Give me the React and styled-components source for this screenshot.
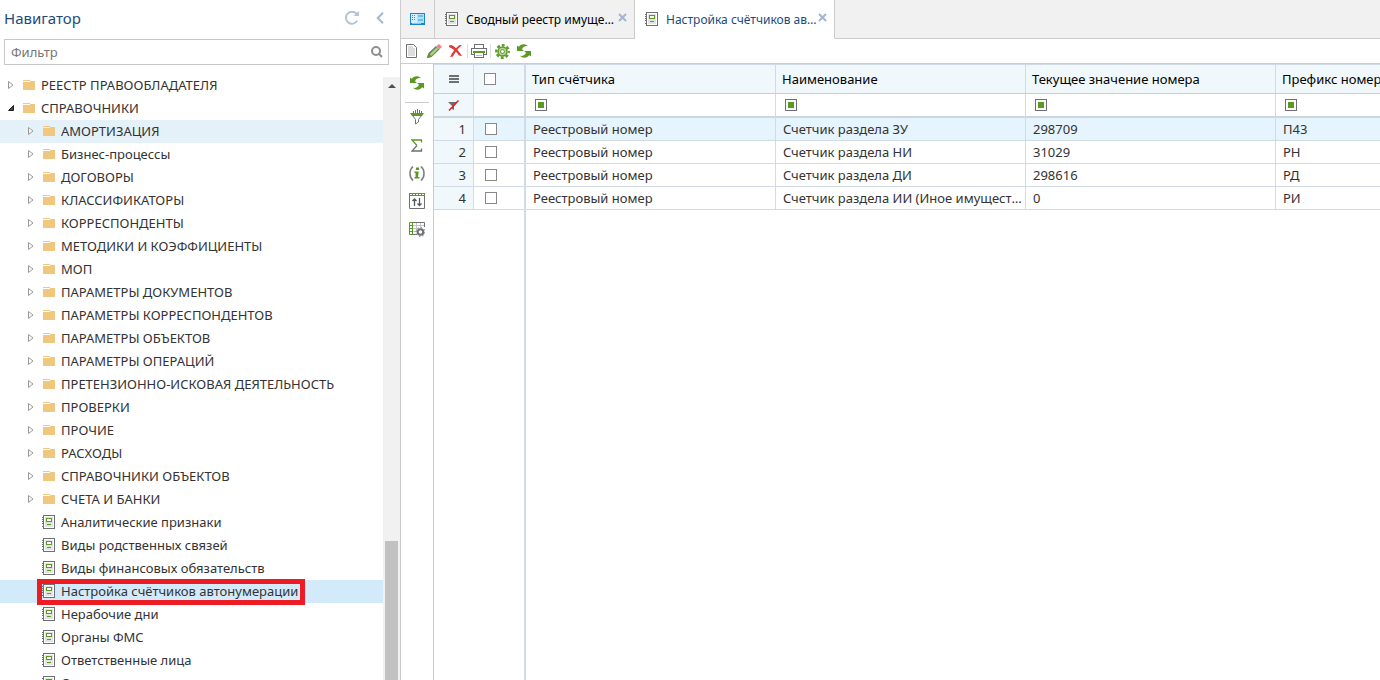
import React from 'react';
import styled, { createGlobalStyle } from 'styled-components';

const GlobalStyle = createGlobalStyle`
    *{ box-sizing:border-box; }
    html, body, #root{ height:100%; }
    body{
        margin:0;
        overflow:hidden;
        background:#fff;
        color:#222;
        font-family:"Noto Sans", "Open Sans", sans-serif;
        font-size:13px;
    }
    button, input{ font:inherit; }
    ul{ list-style:none; margin:0; padding:0; }
`

/* icons */

const FolderIcon = () => (
    <svg width="12" height="10" viewBox="0 0 12 10" shapeRendering="crispEdges">
        <path d="M0 0h7v1H0zM7 1h5v1H7zM0 2h12v8H0z" fill="#efc77f" />
    </svg>
);

const BookIcon = () => (
    <svg width="14" height="14" viewBox="0 0 14 14" shapeRendering="crispEdges">
        <path d="M1 0h12v14H1z" fill="#6e7173" />
        <path d="M2 1h10v12H2z" fill="#fff" />
        <path d="M3 2h8v10H3z" fill="#e3e3e3" />
        <path d="M0 2h1v1H0zM0 4h1v1H0zM0 6h1v1H0zM0 8h1v1H0zM0 11h1v1H0z" fill="#6e7173" />
        <path d="M4 3h6v4H4z" fill="#5a9a22" />
        <path d="M5 4h4v2H5z" fill="#fff" />
        <path d="M5 9h4v1H5z" fill="#5a9a22" />
    </svg>
);

const ClosedArrow = () => (
    <svg width="6" height="8" viewBox="0 0 6 8">
        <path d="M.5.500v7L5 4z" fill="#fff" stroke="#999" />
    </svg>
);

const OpenArrow = () => (
    <svg width="6" height="6" viewBox="0 0 6 6">
        <path d="M5.500.500v5H.500z" fill="#444" stroke="#222" />
    </svg>
);

const RefreshIcon = () => (
    <svg width="14" height="14" viewBox="0 0 14 14" fill="none">
        <path d="M12.200 9.600A6 6 0 1 1 11.600 3" stroke="#b3c4d9" strokeWidth="2" />
        <path d="M8.500 5H14V0z" fill="#b3c4d9" />
    </svg>
);

const CollapseIcon = () => (
    <svg width="8" height="12" viewBox="0 0 8 12" fill="none">
        <path d="M7 .800L1.800 6 7 11.200" stroke="#a3b9d3" strokeWidth="2" />
    </svg>
);

const SearchIcon = () => (
    <svg width="12" height="12" viewBox="0 0 12 12" fill="none" stroke="#8f8f8f" strokeWidth="2">
        <circle cx="5" cy="5" r="4" />
        <path d="M7.500 7.500l3.500 3.500" />
    </svg>
);

const HomeIcon = () => (
    <svg width="15" height="12" viewBox="0 0 15 12" shapeRendering="crispEdges">
        <path d="M0 0h15v12H0z" fill="#1586cf" />
        <path d="M1 1h13v9H1z" fill="#d8f0fc" />
        <path d="M2 2h1v1H2zM4 4h1v1H4zM2 6h1v1H2z" fill="#5a9a22" />
        <path d="M4 2h1v1H4zM2 4h1v1H2zM4 6h1v1H4z" fill="#3b95cf" />
        <path d="M7 1h7v9H7z" fill="#b5e0f7" />
        <path d="M8 2h5v2H8zM8 6h5v2H8z" fill="#6fbdea" />
        <path d="M2 10h9v1H2z" fill="#8cc9ee" />
    </svg>
);

const CloseIcon = () => (
    <svg width="9" height="9" viewBox="0 0 9 9" fill="none">
        <path d="M1 1l7 7M8 1L1 8" stroke="#a3b5ce" strokeWidth="2" />
    </svg>
);

const PageIcon = () => (
    <svg width="12" height="14" viewBox="0 0 12 14">
        <path d="M.5.500h7l3 3v10H.500z" fill="#fff" stroke="#6e7173" />
        <path d="M2 2h5v2h2v8H2z" fill="#dcdcdc" />
    </svg>
);

const PencilIcon = () => (
    <svg width="15" height="14" viewBox="0 0 15 14">
        <path d="M0 14l1.500-5 7.500-7L12.500 5.500l-8 7.500z" fill="#6e7173" />
        <path d="M2.500 10l7-6.700 2 2-7 6.700z" fill="#8fc55a" />
        <path d="M3.500 11l7-6.700" stroke="#e8f4dc" strokeWidth=".7" />
        <path d="M9.500 2L12 0l3 3-2.500 2.300z" fill="#f0808a" />
        <path d="M0 14l1.200-4 2.800 3z" fill="#5a9a22" />
    </svg>
);

const DeleteIcon = () => (
    <svg width="14" height="12" viewBox="0 0 14 12">
        <path d="M0 .5L2.500 0C6 1.500 9 5 13 11l-3-.5C7.500 6.500 4 3.500 0 2z" fill="#e23a36" />
        <path d="M10.500 0H13C9.500 3 6.500 6.500 4 11.500L1 12C3.500 6.500 7 2.500 10.500 0z" fill="#e23a36" />
    </svg>
);

const PrintIcon = () => (
    <svg width="16" height="14" viewBox="0 0 16 14" shapeRendering="crispEdges">
        <path d="M3.500 4V.500h9V4" fill="#fff" stroke="#6e7173" />
        <path d="M.500 4.500h15v6H.500z" fill="#fff" stroke="#6e7173" />
        <path d="M2 7h12v2H2z" fill="#5a9a22" />
        <path d="M3.500 8.500h9v5h-9z" fill="#fff" stroke="#6e7173" />
        <path d="M3 8h10v1H3z" fill="#5a9a22" />
        <path d="M5 11.500h6" stroke="#bbb" />
    </svg>
);

const GearIcon = () => (
    <svg width="15" height="15" viewBox="0 0 15 15" fill="none">
        <circle cx="7.500" cy="7.500" r="6.200" stroke="#5f9a2d" strokeWidth="2.400" strokeDasharray="2.900 1.970" strokeDashoffset="1.450" />
        <circle cx="7.500" cy="7.500" r="4.500" fill="#b9d99a" stroke="#5f9a2d" strokeWidth="1.500" />
        <circle cx="7.500" cy="7.500" r="2" fill="#fff" stroke="#5f9a2d" />
    </svg>
);

const SyncIcon = () => (
    <svg width="14" height="14" viewBox="0 0 14 14">
        <path d="M0 1.500L1.800 2.800C4.500-.5 8.500-.3 11 2.200 8.300 1.800 6 2.600 5 5.200L7 7H0z" fill="#5a9a22" />
        <path d="M14 12.500l-1.800-1.300C9.500 14.500 5.500 14.300 3 11.800c2.700.4 5-.4 6-3L7 7h7z" fill="#5a9a22" />
    </svg>
);

const FunnelIcon = () => (
    <svg width="14" height="16" viewBox="0 0 14 16" fill="none">
        <path d="M0 4h14l-2 3H2z" fill="#5a9a22" />
        <path d="M2.500 6.500l3 4V15l3-2v-2.500l3-4" stroke="#6e7173" />
        <path d="M3.500 2v2M5.500 1v3M7.500 0v4M9.500 1v3M11.500 2v2" stroke="#6e7173" />
    </svg>
);

const SumIcon = () => (
    <svg width="12" height="13" viewBox="0 0 12 13" fill="none" strokeWidth="1.300">
        <path d="M6 6.500L1 12h9.500V9.500" stroke="#6e7173" />
        <path d="M10.500 3.500V1H1l5 5.500" stroke="#5a9a22" />
    </svg>
);

const InfoIcon = () => (
    <svg width="16" height="15" viewBox="0 0 16 15" fill="none">
        <path d="M4 .5C0 4 0 11 4 14.500M12 .5c4 3.500 4 10.500 0 14" stroke="#808385" strokeWidth="1.600" />
        <path d="M7 1.500h3v2.500H7zM5.500 5.500h4.200L9 11h1.500v1.500H5.500V11h1V7h-1z" fill="#5a9a22" />
    </svg>
);

const SortIcon = () => (
    <svg width="16" height="16" viewBox="0 0 16 16" fill="none">
        <path d="M.500.500h15v15H.500z" stroke="#6e7173" />
        <path d="M0 0h16v3H0z" fill="#5a9a22" />
        <path d="M1 1.500h14" stroke="#fff" strokeDasharray="2 1" />
        <path d="M5.500 13V6M3.500 8l2-2 2 2M10.500 5v7M8.500 10.500l2 2 2-2" stroke="#55585a" strokeWidth="1.300" />
    </svg>
);

const TableGearIcon = () => (
    <svg width="16" height="15" viewBox="0 0 16 15" fill="none">
        <path d="M4 3.500h11M4 6.500h6M4 9.500h4M7.500 0v11M11.500 0v6" stroke="#c4c4c4" />
        <path d="M3 .500h12.500V5M3 12.500h5" stroke="#6e7173" />
        <path d="M.500.500h3v12h-3zM.500 3.500h3M.500 6.500h3M.500 9.500h3" stroke="#5a9a22" />
        <circle cx="11.500" cy="10" r="4.400" fill="#fff" stroke="#6e7173" strokeDasharray="1.500 1.900" />
        <circle cx="11.500" cy="10" r="2.800" fill="#fff" stroke="#6e7173" strokeWidth="2" />
    </svg>
);

const MenuIcon = () => (
    <svg width="10" height="8" viewBox="0 0 10 8" shapeRendering="crispEdges">
        <path d="M0 0h10v2H0zM0 3h10v2H0zM0 6h10v2H0z" fill="#6e7173" />
    </svg>
);

const ClearFilterIcon = () => (
    <svg width="11" height="11" viewBox="0 0 11 11">
        <path d="M0 2h9L6 6v4L4 9V6z" fill="#6e7173" />
        <path d="M1 10.500L10.500.5" stroke="#f01818" strokeWidth="1.500" />
    </svg>
);

const FilterMarkIcon = () => (
    <svg width="12" height="12" viewBox="0 0 12 12" shapeRendering="crispEdges">
        <path d="M0 0h12v12H0z" fill="#6e7173" />
        <path d="M1 1h10v10H1z" fill="#fff" />
        <path d="M3 3h6v6H3z" fill="#5a9a22" />
    </svg>
);

const ScrollUpIcon = () => (
    <svg width="8" height="4" viewBox="0 0 8 4">
        <path d="M0 4l4-4 4 4z" fill="#505050" />
    </svg>
);

/* data */

const tree = [
    { name: 'РЕЕСТР ПРАВООБЛАДАТЕЛЯ', kind: 'folder', level: 0 },
    { name: 'СПРАВОЧНИКИ', kind: 'folder', level: 0, open: true },
    { name: 'АМОРТИЗАЦИЯ', kind: 'folder', level: 1, hovered: true },
    { name: 'Бизнес-процессы', kind: 'folder', level: 1 },
    { name: 'ДОГОВОРЫ', kind: 'folder', level: 1 },
    { name: 'КЛАССИФИКАТОРЫ', kind: 'folder', level: 1 },
    { name: 'КОРРЕСПОНДЕНТЫ', kind: 'folder', level: 1 },
    { name: 'МЕТОДИКИ И КОЭФФИЦИЕНТЫ', kind: 'folder', level: 1 },
    { name: 'МОП', kind: 'folder', level: 1 },
    { name: 'ПАРАМЕТРЫ ДОКУМЕНТОВ', kind: 'folder', level: 1 },
    { name: 'ПАРАМЕТРЫ КОРРЕСПОНДЕНТОВ', kind: 'folder', level: 1 },
    { name: 'ПАРАМЕТРЫ ОБЪЕКТОВ', kind: 'folder', level: 1 },
    { name: 'ПАРАМЕТРЫ ОПЕРАЦИЙ', kind: 'folder', level: 1 },
    { name: 'ПРЕТЕНЗИОННО-ИСКОВАЯ ДЕЯТЕЛЬНОСТЬ', kind: 'folder', level: 1 },
    { name: 'ПРОВЕРКИ', kind: 'folder', level: 1 },
    { name: 'ПРОЧИЕ', kind: 'folder', level: 1 },
    { name: 'РАСХОДЫ', kind: 'folder', level: 1 },
    { name: 'СПРАВОЧНИКИ ОБЪЕКТОВ', kind: 'folder', level: 1 },
    { name: 'СЧЕТА И БАНКИ', kind: 'folder', level: 1 },
    { name: 'Аналитические признаки', kind: 'book', level: 1 },
    { name: 'Виды родственных связей', kind: 'book', level: 1 },
    { name: 'Виды финансовых обязательств', kind: 'book', level: 1 },
    { name: 'Настройка счётчиков автонумерации', kind: 'book', level: 1, selected: true },
    { name: 'Нерабочие дни', kind: 'book', level: 1 },
    { name: 'Органы ФМС', kind: 'book', level: 1 },
    { name: 'Ответственные лица', kind: 'book', level: 1 },
    { name: 'Словари', kind: 'book', level: 1 },
];

const columns = ['Тип счётчика', 'Наименование', 'Текущее значение номера', 'Префикс номера'];

const rows = [
    ['Реестровый номер', 'Счетчик раздела ЗУ', '298709', 'П43'],
    ['Реестровый номер', 'Счетчик раздела НИ', '31029', 'РН'],
    ['Реестровый номер', 'Счетчик раздела ДИ', '298616', 'РД'],
    ['Реестровый номер', 'Счетчик раздела ИИ (Иное имущество)', '0', 'РИ'],
];

const Navigator = () => (
    <Sidebar>
        <SidebarHeader>
            <SidebarTitle>Навигатор</SidebarTitle>
            <IconButton aria-label="Обновить"><RefreshIcon /></IconButton>
            <IconButton aria-label="Свернуть"><CollapseIcon /></IconButton>
        </SidebarHeader>
        <FilterBox>
            <FilterInput type="text" placeholder="Фильтр" aria-label="Фильтр" />
            <SearchIcon />
        </FilterBox>
        <TreeArea>
            <Tree>
                {tree.map(item => (
                    <TreeRow key={item.name} $level={item.level} $hovered={item.hovered} $selected={item.selected}>
                        <ArrowCell>
                            {item.kind === 'folder' && (item.open ? <OpenArrow /> : <ClosedArrow />)}
                        </ArrowCell>
                        <TreeLink href="#" $marked={item.selected}>
                            <TreeIcon>{item.kind === 'folder' ? <FolderIcon /> : <BookIcon />}</TreeIcon>
                            {item.name}
                        </TreeLink>
                    </TreeRow>
                ))}
            </Tree>
            <ScrollTrack>
                <ScrollUpIcon />
                <ScrollThumb />
            </ScrollTrack>
        </TreeArea>
    </Sidebar>
);

const Tabs = () => (
    <TabBar>
        <HomeTab aria-label="Рабочий стол"><HomeIcon /></HomeTab>
        <Tab>
            <TabButton><BookIcon /><TabText>Сводный реестр имущества</TabText></TabButton>
            <TabClose aria-label="Закрыть"><CloseIcon /></TabClose>
        </Tab>
        <Tab $active>
            <TabButton><BookIcon /><TabText>Настройка счётчиков автонумерации</TabText></TabButton>
            <TabClose aria-label="Закрыть"><CloseIcon /></TabClose>
        </Tab>
        <TabSpace />
    </TabBar>
);

const DataGrid = () => (
    <GridArea>
        <Table>
            <colgroup>
                <NumberCol />
                <CheckCol />
                {columns.map(name => <DataCol key={name} />)}
            </colgroup>
            <thead>
                <HeaderRow>
                    <HeaderCell $center><MenuIcon /></HeaderCell>
                    <HeaderCell $thick><CheckBox type="checkbox" aria-label="Выбрать все" /></HeaderCell>
                    {columns.map(name => <HeaderCell key={name}>{name}</HeaderCell>)}
                </HeaderRow>
                <FilterRow>
                    <FilterCell $center $tinted><ClearFilterIcon /></FilterCell>
                    <FilterCell $thick />
                    {columns.map(name => <FilterCell key={name}><FilterMarkIcon /></FilterCell>)}
                </FilterRow>
            </thead>
            <tbody>
                {rows.map((row, i) => (
                    <Row key={row[1]} $selected={i === 0}>
                        <NumberCell>{i + 1}</NumberCell>
                        <Cell $thick><CheckBox type="checkbox" aria-label={`Строка ${i + 1}`} /></Cell>
                        {row.map((value, j) => <Cell key={j}>{value}</Cell>)}
                    </Row>
                ))}
            </tbody>
        </Table>
        <GridRest />
    </GridArea>
);

const App = () => (
    <Page>
        <GlobalStyle />
        <Navigator />
        <Main>
            <Tabs />
            <Toolbar>
                <ToolButton aria-label="Создать"><PageIcon /></ToolButton>
                <ToolButton aria-label="Изменить"><PencilIcon /></ToolButton>
                <ToolButton aria-label="Удалить"><DeleteIcon /></ToolButton>
                <Divider />
                <ToolButton aria-label="Печать"><PrintIcon /></ToolButton>
                <Divider />
                <ToolButton aria-label="Настройки"><GearIcon /></ToolButton>
                <ToolButton aria-label="Обновить"><SyncIcon /></ToolButton>
            </Toolbar>
            <Content>
                <SideTools>
                    <SideButton $first aria-label="Обновить"><SyncIcon /></SideButton>
                    <SideButton aria-label="Фильтр"><FunnelIcon /></SideButton>
                    <SideButton aria-label="Итоги"><SumIcon /></SideButton>
                    <SideButton aria-label="Информация"><InfoIcon /></SideButton>
                    <SideButton aria-label="Сортировка"><SortIcon /></SideButton>
                    <SideButton aria-label="Настройка таблицы"><TableGearIcon /></SideButton>
                </SideTools>
                <DataGrid />
            </Content>
        </Main>
    </Page>
);

export default App;

const Page = styled.div`
    display:flex;
    height:100vh;
`

const Sidebar = styled.aside`
    display:flex;
    flex-direction:column;
    flex:0 0 400px;
    overflow:hidden;
`

const PlainButton = styled.button`
    display:flex;
    align-items:center;
    justify-content:center;
    padding:0;
    border:none;
    background:none;
    color:inherit;
    cursor:pointer;
`

const SidebarHeader = styled.div`
    display:flex;
    align-items:center;
    flex:none;
    height:36px;
    padding:0 10px 0 4px;
`

const SidebarTitle = styled.h1`
    flex:1;
    margin:0;
    font-size:15px;
    line-height:20px;
    font-weight:400;
    color:#1c4a7d;
`

const IconButton = styled(PlainButton)`
    width:20px;
    height:20px;
    & + &{ margin-left:8px; }
`

const FilterBox = styled.div`
    display:flex;
    align-items:center;
    flex:none;
    height:26px;
    margin:3px 11px 0 4px;
    padding:0 5px 0 6px;
    border:1px solid #c8c8c8;
`

const FilterInput = styled.input`
    flex:1;
    min-width:0;
    padding:0;
    border:none;
    outline:none;
    &::placeholder{ color:#757575; opacity:1; }
`

const TreeArea = styled.div`
    display:flex;
    flex:1;
    min-height:0;
    padding-top:9px;
`

const Tree = styled.ul`
    flex:1;
    min-width:0;
    overflow:hidden;
`

const TreeRow = styled.li`
    display:flex;
    height:23px;
    padding-left:${p => 5 + p.$level * 20}px;
    background:${p => p.$selected ? '#d3eafa' : p.$hovered ? '#e4f1f9' : 'none'};
`

const ArrowCell = styled.span`
    display:flex;
    align-items:center;
    justify-content:center;
    width:12px;
    height:22px;
    margin-right:5px;
`

const TreeLink = styled.a`
    position:relative;
    display:flex;
    align-items:center;
    height:22px;
    white-space:nowrap;
    color:#333;
    text-decoration:none;
    ${p => p.$marked && `
        &::after{
            content:'';
            position:absolute;
            inset:-1px -7px -3px -5px;
            border:5px solid #ed1c24;
        }
    `}
`

const TreeIcon = styled.span`
    display:flex;
    justify-content:center;
    width:14px;
    margin-right:5px;
`

const ScrollTrack = styled.div`
    display:flex;
    flex-direction:column;
    align-items:center;
    width:17px;
    margin-top:3px;
    padding-top:7px;
    background:#f1f1f1;
`

const ScrollThumb = styled.div`
    width:13px;
    flex:1;
    margin-top:453px;
    background:#c1c1c1;
`

const Main = styled.main`
    display:flex;
    flex-direction:column;
    flex:1;
    min-width:0;
    border-left:1px solid #ccc;
`

const TabBar = styled.div`
    display:flex;
    flex:none;
    height:39px;
    background:#f1f1f1;
`

const HomeTab = styled(PlainButton)`
    width:34px;
    border-right:1px solid #ccc;
    border-bottom:1px solid #ccc;
`

const Tab = styled.div`
    display:flex;
    width:200px;
    padding:0 7px 0 10px;
    border-right:1px solid #ccc;
    border-bottom:1px solid ${p => p.$active ? '#fff' : '#ccc'};
    background:${p => p.$active ? '#fff' : 'none'};
    color:${p => p.$active ? '#1c4a7d' : '#000'};
`

const TabButton = styled(PlainButton)`
    flex:1;
    gap:7px;
    min-width:0;
    font-size:12px;
`

const TabText = styled.span`
    flex:1;
    overflow:hidden;
    white-space:nowrap;
    text-overflow:ellipsis;
    text-align:left;
`

const TabClose = styled(PlainButton)`
    align-self:flex-start;
    width:9px;
    height:9px;
    margin:13px 0 0 1px;
`

const TabSpace = styled.div`
    flex:1;
    border-bottom:1px solid #ccc;
`

const Toolbar = styled.div`
    display:flex;
    align-items:center;
    flex:none;
    height:25px;
    border-bottom:1px solid #ccc;
`

const ToolButton = styled(PlainButton)`
    width:22px;
    height:22px;
`

const Divider = styled.span`
    width:1px;
    height:14px;
    background:#ddd;
`

const Content = styled.div`
    display:flex;
    flex:1;
    min-height:0;
`

const SideTools = styled.div`
    display:flex;
    flex-direction:column;
    align-items:center;
    flex:0 0 33px;
    border-right:1px solid #ccc;
`

const SideButton = styled(PlainButton)`
    width:24px;
    height:${p => p.$first ? '39px' : '28px'};
    border-bottom:${p => p.$first ? '1px solid #ccc' : 'none'};
`

const GridArea = styled.div`
    display:flex;
    flex-direction:column;
    flex:1;
    min-width:0;
    overflow:hidden;
`

const Table = styled.table`
    flex:none;
    width:1092px;
    table-layout:fixed;
    border-collapse:separate;
    border-spacing:0;
    border-top:1px solid #d0dbe6;
`

const NumberCol = styled.col`
    width:40px;
`

const CheckCol = styled.col`
    width:52px;
`

const DataCol = styled.col`
    width:250px;
`

const HeaderRow = styled.tr`
    height:29px;
    background:#f0f8fb;
`

const FilterRow = styled.tr`
    height:24px;
`

const Row = styled.tr`
    height:23px;
    background:${p => p.$selected ? '#e6f4fe' : '#fff'};
`

const HeaderCell = styled.th`
    padding:${p => p.$center ? '0' : p.$thick ? '0 10px' : '0 6px'};
    border-right:${p => p.$thick ? '2px' : '1px'} solid #d0dbe6;
    border-bottom:1px solid #ccc;
    text-align:left;
    font-weight:400;
    white-space:nowrap;
    color:#000;
    svg{ display:block; margin:0 auto; }
`

const FilterCell = styled.td`
    padding:${p => p.$center ? '0' : '0 9px'};
    border-right:${p => p.$thick ? '2px' : '1px'} solid #d0dbe6;
    border-bottom:2px solid #ccd6de;
    background:${p => p.$tinted ? '#f0f8fb' : 'none'};
    svg{ display:block; margin:${p => p.$center ? '0 auto' : '0'}; }
`

const Cell = styled.td`
    padding:0 3px 0 ${p => p.$thick ? '11px' : '7px'};
    border-right:${p => p.$thick ? '2px' : '1px'} solid #d0dbe6;
    border-bottom:1px solid #d0dbe6;
    overflow:hidden;
    white-space:nowrap;
    text-overflow:ellipsis;
    color:#333;
`

const NumberCell = styled(Cell)`
    padding-right:7px;
    background:#f0f8fb;
    text-align:right;
`

const CheckBox = styled.input`
    appearance:none;
    display:block;
    width:12px;
    height:12px;
    margin:0;
    border:1px solid #888;
    background:#fff;
`

const GridRest = styled.div`
    flex:1;
    width:92px;
    border-right:2px solid #d0dbe6;
`
